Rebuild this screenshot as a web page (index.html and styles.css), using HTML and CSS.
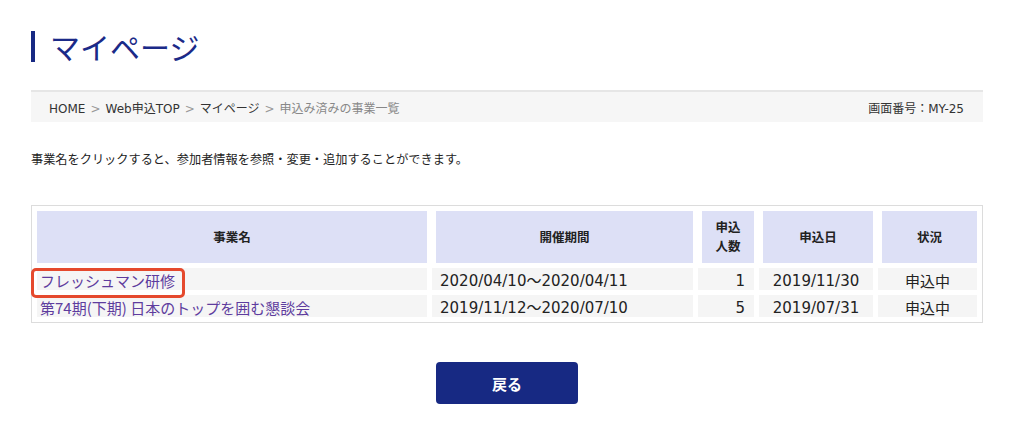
FILE: index.html
```html
<!DOCTYPE html>
<html lang="ja">
<head>
<meta charset="utf-8">
<title>マイページ</title>
<link rel="stylesheet" href="styles.css">
</head>
<body>
<div class="page">
  <h1 class="title">マイページ</h1>

  <div class="crumbs">
    <div class="crumb-path">
      <a href="#" class="crumb-link">HOME</a><span class="sep">&gt;</span><a href="#" class="crumb-link">Web申込TOP</a><span class="sep">&gt;</span><a href="#" class="crumb-link">マイページ</a><span class="sep">&gt;</span><span class="crumb-current">申込み済みの事業一覧</span>
    </div>
    <div class="screen-id">画面番号：MY-25</div>
  </div>

  <p class="lead">事業名をクリックすると、参加者情報を参照・変更・追加することができます。</p>

  <table class="list">
    <thead>
      <tr>
        <th class="c-name">事業名</th>
        <th class="c-period">開催期間</th>
        <th class="c-count">申込<br>人数</th>
        <th class="c-date">申込日</th>
        <th class="c-status">状況</th>
      </tr>
    </thead>
    <tbody>
      <tr>
        <td class="c-name"><span class="highlight-wrap"><a href="#" class="event-link">フレッシュマン研修</a><span class="highlight"></span></span></td>
        <td class="c-period">2020/04/10～2020/04/11</td>
        <td class="c-count">1</td>
        <td class="c-date">2019/11/30</td>
        <td class="c-status">申込中</td>
      </tr>
      <tr>
        <td class="c-name"><a href="#" class="event-link">第74期(下期) 日本のトップを囲む懇談会</a></td>
        <td class="c-period">2019/11/12～2020/07/10</td>
        <td class="c-count">5</td>
        <td class="c-date">2019/07/31</td>
        <td class="c-status">申込中</td>
      </tr>
    </tbody>
  </table>

  <div class="actions">
    <button class="back-btn" type="button">戻る</button>
  </div>
</div>
</body>
</html>
```

FILE: styles.css
```css
* { box-sizing: border-box; }

html, body {
  margin: 0;
  padding: 0;
  background: #fff;
}

body {
  font-family: "DejaVu Sans", "Noto Sans CJK JP", sans-serif;
  color: #222;
}

.page {
  padding: 0 31px;
}

.title {
  margin: 0;
  padding-top: 29px;
  height: 90px;
  display: flex;
  align-items: flex-start;
  font-family: "Noto Sans CJK JP", sans-serif;
  font-weight: 400;
  font-size: 30px;
  line-height: 34px;
  color: #1b2a88;
}

.title::before {
  content: "";
  display: block;
  width: 4px;
  height: 31px;
  margin-top: 2px;
  margin-right: 15px;
  background: #172983;
}

.crumbs {
  display: flex;
  justify-content: space-between;
  align-items: center;
  height: 32px;
  border-top: 2px solid #e6e6e6;
  background: #f6f6f6;
  padding: 0 19px 0 18px;
  font-size: 12px;
  color: #333;
}

.crumb-link {
  color: #333;
  text-decoration: none;
}

.sep {
  color: #999;
  margin: 0 5px;
}

.crumb-current {
  color: #888;
}

.screen-id {
  color: #333;
}

.lead {
  margin: 0;
  padding-top: 30px;
  height: 83px;
  font-size: 12.2px;
  line-height: 16px;
  color: #222;
}

.list {
  width: 952px;
  border: 1px solid #dcdcdc;
  border-collapse: separate;
  border-spacing: 5px;
  table-layout: fixed;
}

.list th {
  background: #dde0f6;
  height: 52px;
  font-size: 12.5px;
  font-weight: 700;
  line-height: 19px;
  color: #222;
  text-align: center;
  padding: 0;
  border-left: 4px solid #fff;
}

.list th.c-name {
  border-left: 0;
}

.list td {
  background: #f5f5f5;
  height: 22px;
  font-size: 15px;
  line-height: 18px;
  padding: 4px 8px 0;
  color: #222;
  white-space: nowrap;
}

.list .c-name { width: 390px; }
.list .c-period { width: 261px; }
.list .c-count { width: 56px; }
.list .c-date { width: 114px; }
.list .c-status { width: 99px; }

.list td.c-name {
  padding-left: 3px;
  font-family: "Noto Sans CJK JP", sans-serif;
}

.list td.c-count {
  text-align: right;
  padding-right: 9px;
}

.list td.c-date {
  text-align: center;
}

.list td.c-status {
  text-align: center;
  font-family: "Noto Sans CJK JP", sans-serif;
}

.event-link {
  color: #5e3c9e;
  text-decoration: none;
}

.highlight-wrap {
  position: relative;
  display: inline-block;
}

.highlight {
  position: absolute;
  left: -9px;
  right: -10px;
  top: -4px;
  bottom: -8px;
  border: 3px solid #e5492d;
  border-radius: 5px;
  pointer-events: none;
}

.actions {
  display: flex;
  justify-content: center;
  padding-top: 39px;
}

.back-btn {
  width: 142px;
  height: 42px;
  border: 0;
  border-radius: 4px;
  background: #172983;
  color: #fff;
  font-family: "Noto Sans CJK JP", sans-serif;
  font-size: 15px;
  font-weight: 700;
  cursor: pointer;
}
```
